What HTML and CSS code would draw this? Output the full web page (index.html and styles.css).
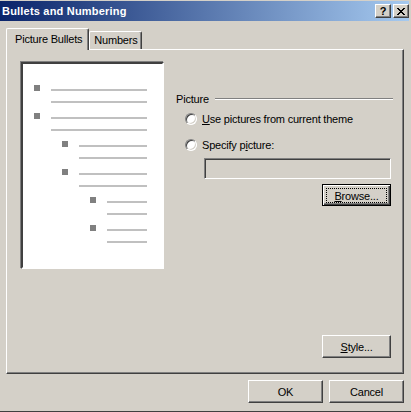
FILE: index.html
```html
<!DOCTYPE html>
<html lang="en">
<head>
    <meta charset="UTF-8">
    <title>Bullets and Numbering</title>
    <link rel="stylesheet" href="styles.css">
</head>
<body>

    <div class="dialog">
        <div class="titlebar">
            <span class="title">Bullets and Numbering</span>
            <div class="caption-buttons">
                <span class="cap-btn help">?</span>
                <span class="cap-btn">
                    <svg width="8" height="7" viewBox="0 0 8 7">
                        <path d="M0 0h2v1h-2zM6 0h2v1h-2zM1 1h2v1h-2zM5 1h2v1h-2zM2 2h4v1h-4zM3 3h2v1h-2zM2 4h4v1h-4zM1 5h2v1h-2zM5 5h2v1h-2zM0 6h2v1h-2zM6 6h2v1h-2z" fill="#000"/>
                    </svg>
                </span>
            </div>
        </div>

        <div class="content">
            <div class="tabs">
                <div class="tab active">Picture Bullets</div>
                <div class="tab">Numbers</div>
            </div>

            <div class="panel">
                <div class="panel-main">
                    <div class="preview">
                        <div class="bullet-item level-1">
                            <span class="dot"></span>
                            <div class="lines"><span></span><span></span></div>
                        </div>
                        <div class="bullet-item level-1">
                            <span class="dot"></span>
                            <div class="lines"><span></span><span></span></div>
                        </div>
                        <div class="bullet-item level-2">
                            <span class="dot"></span>
                            <div class="lines"><span></span><span></span></div>
                        </div>
                        <div class="bullet-item level-2">
                            <span class="dot"></span>
                            <div class="lines"><span></span><span></span></div>
                        </div>
                        <div class="bullet-item level-3">
                            <span class="dot"></span>
                            <div class="lines"><span></span><span></span></div>
                        </div>
                        <div class="bullet-item level-3">
                            <span class="dot"></span>
                            <div class="lines"><span></span><span></span></div>
                        </div>
                    </div>

                    <div class="options">
                        <div class="group-title">
                            <span>Picture</span>
                            <span class="rule"></span>
                        </div>
                        <div class="radio-row">
                            <span class="radio"></span>
                            <span><u>U</u>se pictures from current theme</span>
                        </div>
                        <div class="radio-row">
                            <span class="radio"></span>
                            <span>Specify p<u>i</u>cture:</span>
                        </div>
                        <div class="path-field"></div>
                        <div class="btn-row">
                            <button class="btn default"><span class="focus"><u>B</u>rowse...</span></button>
                        </div>
                    </div>
                </div>

                <div class="panel-footer">
                    <button class="btn"><u>S</u>tyle...</button>
                </div>
            </div>

            <div class="footer">
                <button class="btn">OK</button>
                <button class="btn">Cancel</button>
            </div>
        </div>
    </div>

</body>
</html>
```

FILE: styles.css
```css
body {
    margin: 0;
    padding: 0;
    background-color: #d4d0c8;
    font-family: 'Liberation Sans', Arial, sans-serif;
    font-size: 11px;
    letter-spacing: -0.2px;
    color: #000;
    overflow: hidden;
}

.dialog {
    width: 411px;
    height: 412px;
    box-sizing: border-box;
    border-top: 1px solid #d4d0c8;
    border-bottom: 1px solid #404040;
    display: flex;
    flex-direction: column;
}

/* title bar */
.titlebar {
    height: 20px;
    margin-right: 2px;
    background: linear-gradient(90deg, #0a246a, #a6caf0);
    display: flex;
    align-items: center;
    justify-content: space-between;
    padding-left: 2px;
}

.title {
    color: #fff;
    font-weight: bold;
    font-size: 11px;
    letter-spacing: 0.2px;
}

.caption-buttons {
    display: flex;
    gap: 2px;
    padding-right: 0;
}

.cap-btn {
    width: 16px;
    height: 14px;
    box-sizing: border-box;
    background-color: #d4d0c8;
    border: 1px solid;
    border-color: #fff #404040 #404040 #fff;
    box-shadow: inset -1px -1px #808080;
    display: flex;
    align-items: center;
    justify-content: center;
}

.cap-btn.help {
    font-weight: bold;
    font-size: 11px;
    line-height: 12px;
}

/* tabs */
.content {
    flex: 1;
    display: flex;
    flex-direction: column;
    padding: 7px 7px 0 6px;
}

.tabs {
    display: flex;
    align-items: flex-end;
    height: 21px;
}

.tab {
    height: 18px;
    box-sizing: border-box;
    padding: 0 3px 0 4px;
    line-height: 16px;
    background-color: #d4d0c8;
    border-top: 1px solid #fff;
    border-left: 1px solid #fff;
    border-right: 1px solid #404040;
    border-radius: 2px 2px 0 0;
    box-shadow: inset -1px 0 #808080;
}

.tab.active {
    height: 22px;
    margin-bottom: -1px;
    padding: 0 6px 0 8px;
    line-height: 20px;
    position: relative;
    z-index: 1;
}

.panel {
    height: 325px;
    box-sizing: border-box;
    border: 1px solid;
    border-color: #fff #404040 #404040 #fff;
    box-shadow: inset -1px -1px #808080;
    display: flex;
    flex-direction: column;
    padding: 12px 12px 15px 14px;
}

.panel-main {
    display: flex;
    align-items: flex-start;
}

/* preview page */
.preview {
    width: 143px;
    height: 207px;
    box-sizing: border-box;
    background-color: #fff;
    border: 2px solid;
    border-color: #404040 #fff #fff #404040;
    box-shadow: -1px -1px 0 #808080, 1px 1px 0 #d4d0c8;
    padding-top: 21px;
}

.bullet-item {
    display: flex;
    height: 28px;
}

.bullet-item .dot {
    width: 6px;
    height: 6px;
    background-color: #808080;
    flex-shrink: 0;
}

.bullet-item .lines {
    display: flex;
    flex-direction: column;
    gap: 10px;
    margin-left: 11px;
    padding-top: 4px;
}

.bullet-item .lines span {
    display: block;
    height: 2px;
    background-color: #c0c0c0;
}

.level-1 { padding-left: 11px; }
.level-1 .lines span { width: 96px; }
.level-2 { padding-left: 39px; }
.level-2 .lines span { width: 68px; }
.level-3 { padding-left: 67px; }
.level-3 .lines span { width: 40px; }

/* picture options */
.options {
    flex: 1;
    margin-left: 12px;
    padding-top: 30px;
}

.group-title {
    display: flex;
    align-items: center;
    height: 13px;
    margin-right: -2px;
}

.group-title .rule {
    flex: 1;
    height: 1px;
    margin-left: 6px;
    background-color: #808080;
    border-bottom: 1px solid #fff;
}

.radio-row {
    display: flex;
    align-items: center;
    height: 18px;
    margin-top: 5px;
    padding-left: 9px;
}

.radio-row + .radio-row {
    margin-top: 8px;
}

.radio {
    width: 12px;
    height: 12px;
    box-sizing: border-box;
    border-radius: 50%;
    background-color: #fff;
    border: 1px solid;
    border-color: #808080 #fff #fff #808080;
    box-shadow: inset 1px 1px #404040, inset -1px -1px #d4d0c8;
    margin-right: 5px;
}

.path-field {
    height: 21px;
    margin: 4px 0 0 28px;
    box-sizing: border-box;
    border: 1px solid;
    border-color: #808080 #fff #fff #808080;
    box-shadow: inset 1px 1px #404040;
}

.btn-row {
    display: flex;
    justify-content: flex-end;
    margin-top: 5px;
}

/* buttons */
.btn {
    width: 69px;
    height: 23px;
    box-sizing: border-box;
    padding: 0;
    font-family: 'Liberation Sans', Arial, sans-serif;
    font-size: 11px;
    letter-spacing: -0.2px;
    color: #000;
    background-color: #d4d0c8;
    border: 1px solid;
    border-color: #fff #404040 #404040 #fff;
    box-shadow: inset -1px -1px #808080;
    display: flex;
    align-items: center;
    justify-content: center;
}

.btn.default {
    height: 22px;
    border: 1px solid #000;
    box-shadow: inset 1px 1px #fff, inset -1px -1px #404040, inset -2px -2px #808080;
}

.btn .focus {
    display: flex;
    align-items: center;
    justify-content: center;
    width: 59px;
    height: 13px;
    margin-top: 1px;
    border: 1px dotted #000;
}

.panel-footer {
    margin-top: auto;
    display: flex;
    justify-content: flex-end;
}

.footer {
    display: flex;
    justify-content: flex-end;
    gap: 6px;
    margin-top: 6px;
}

.footer .btn {
    width: 75px;
    height: 23px;
}
```
